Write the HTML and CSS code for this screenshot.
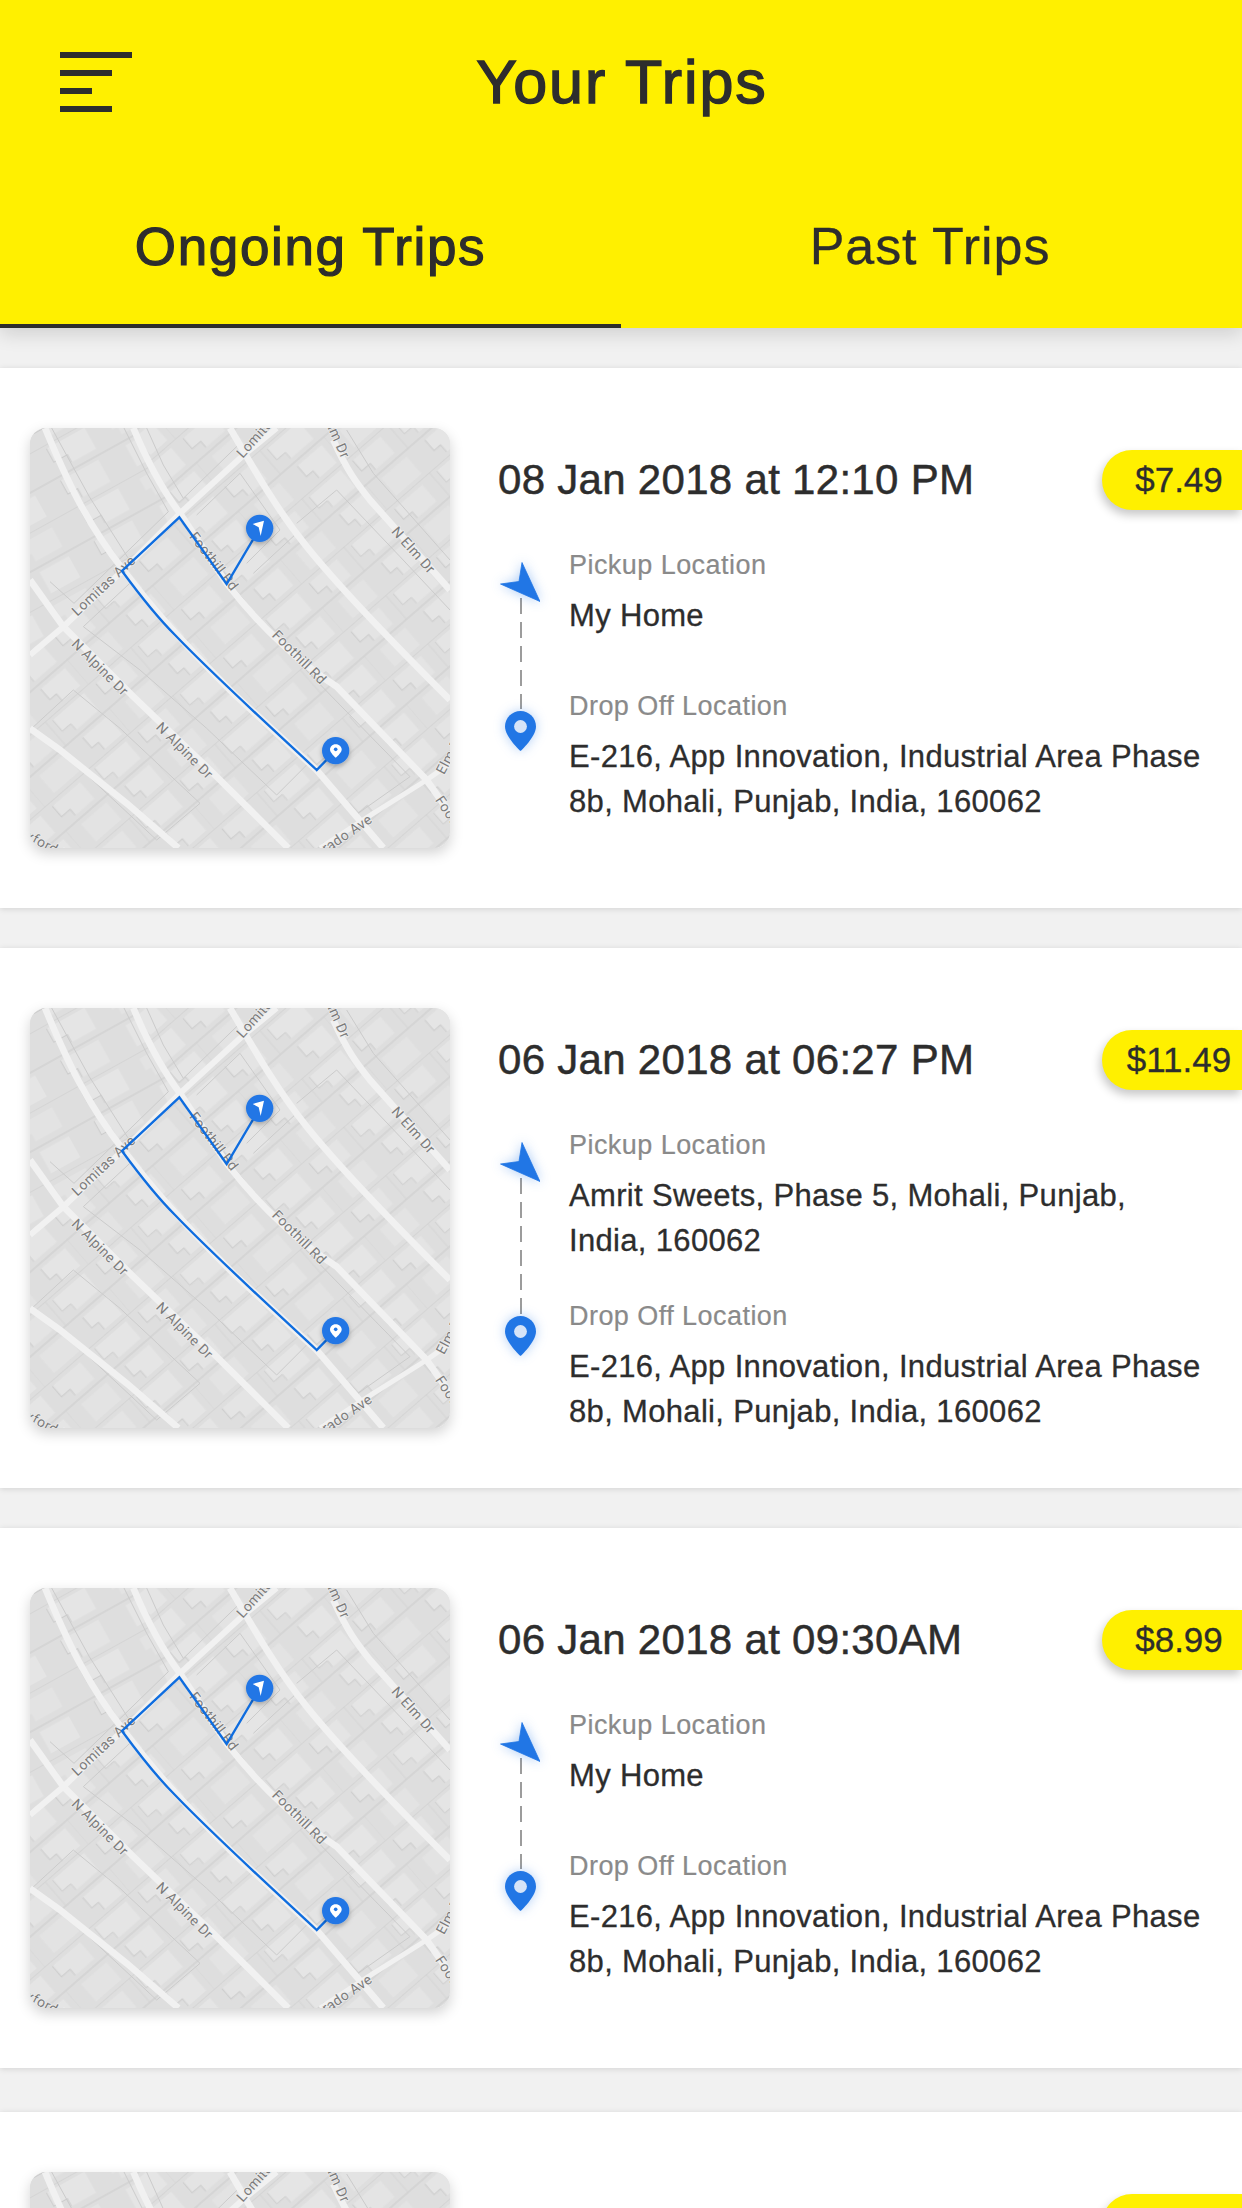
FILE: index.html
```html
<!DOCTYPE html>
<html lang="en">
<head>
<meta charset="utf-8">
<title>Your Trips</title>
<link rel="stylesheet" href="styles.css">
</head>
<body>
<svg class="defs" width="0" height="0" aria-hidden="true">
  <defs>
    <filter id="soft" x="-5%" y="-5%" width="110%" height="110%"><feGaussianBlur stdDeviation="1.3"/></filter>
    <filter id="markerShadow" x="-40%" y="-40%" width="180%" height="180%"><feDropShadow dx="0" dy="6" stdDeviation="8" flood-color="#000" flood-opacity=".28"/></filter>
    <pattern id="lotsA" width="410" height="208" patternUnits="userSpaceOnUse" patternTransform="translate(90 160) rotate(-29)">
      <path d="M50 12h130v72h-84v-26h-46z" fill="#e5e5e5"/>
      <path d="M50 12v46h46v26" fill="none" stroke="#cbcbcb" stroke-width="3"/>
      <path d="M250 18h110v66h-92v-26h-18z" fill="#e3e3e3"/>
      <path d="M40 116h130v76h-96v-30h-34z" fill="#e4e4e4"/>
      <path d="M40 116v46h34v30" fill="none" stroke="#cbcbcb" stroke-width="3"/>
      <path d="M262 118h100v72h-100z" fill="#e5e5e5"/>
      <path d="M0 0H410M0 104H410" stroke="#cbcbcb" stroke-width="3"/>
    </pattern>
    <pattern id="lotsB" width="340" height="192" patternUnits="userSpaceOnUse" patternTransform="translate(520 630) rotate(-41)">
      <path d="M20 14h110v66h-76v-24h-34z" fill="#e4e4e4"/>
      <path d="M20 14v42h34v24" fill="none" stroke="#cbcbcb" stroke-width="3"/>
      <path d="M190 12h124v68h-90v-24h-34z" fill="#e5e5e5"/>
      <path d="M190 12v44h34v24" fill="none" stroke="#cdcdcd" stroke-width="2.5"/>
      <path d="M50 112h100v68h-100z" fill="#e3e3e3"/>
      <path d="M224 110h96v70h-70v-28h-26z" fill="#e5e5e5"/>
      <path d="M224 110v42h26v28" fill="none" stroke="#cbcbcb" stroke-width="3"/>
      <path d="M0 0H340M0 96H340" stroke="#cbcbcb" stroke-width="3"/>
      <path d="M170 0V96M0 96V192" stroke="#d0d0d0" stroke-width="2"/>
    </pattern>
    <symbol id="basemap" viewBox="90 84 1260 1260">
      <rect x="90" y="84" width="1260" height="1260" fill="#dedede"/>
      <g filter="url(#soft)">
        <rect x="90" y="84" width="1260" height="1260" fill="url(#lotsB)"/>
        <path d="M90 84H400L540 340 190 680 90 770Z" fill="#dedede"/>
        <path d="M90 84H400L540 340 190 680 90 770Z" fill="url(#lotsA)"/>
        <g fill="none" stroke="#cbcbcb" stroke-width="3">
          <path d="M155 84 268 290 392 486M372 84 440 220 505 335 222 610 150 545"/>
          <path d="M440 84 490 195 550 295 720 130"/>
          <path d="M590 345 720 220 840 390 740 490"/>
          <path d="M250 680 400 540 520 690 690 860 930 1085 830 1185 620 985 420 810Z"/>
          <path d="M700 560 830 720 1230 1130 1060 1250 960 1130"/>
          <path d="M760 520 890 400 1060 610 1320 880"/>
          <path d="M890 370 1010 270 1200 470 1350 630"/>
          <path d="M90 990 220 870 360 985 600 1210 470 1320 170 1040"/>
          <path d="M1040 90 1120 220 1350 480"/>
        </g>
      </g>
      <g fill="none" stroke="#f1f1f1" stroke-width="20" stroke-linecap="butt">
        <path d="M135 84C200 240 260 370 370 510 450 615 520 700 700 880L950 1110 1150 1344"/>
        <path d="M400 84C440 180 480 260 540 340L680 550C780 680 900 790 1010 860L1280 1140 1350 1240"/>
        <path d="M690 84C780 240 840 340 920 440 1000 540 1180 730 1350 900"/>
        <path d="M1000 120C1040 210 1070 250 1110 300L1350 570"/>
        <path d="M90 540 190 680 400 890 640 1120 865 1344"/>
        <path d="M90 985 180 1050 380 1210 535 1344"/>
        <path d="M90 765 190 680 370 510 540 340 725 170 830 84" stroke-width="18"/>
        <path d="M960 1344 1120 1240 1280 1140 1350 1090" stroke-width="15"/>
      </g>
      <g class="map-label">
        <text transform="translate(232 650) rotate(-43)">Lomitas Ave</text>
        <text transform="translate(728 176) rotate(-48)">Lomitas Ave</text>
        <text transform="translate(972 60) rotate(66)">Elm Dr</text>
        <text transform="translate(1172 396) rotate(48)">N Elm Dr</text>
        <text transform="translate(566 410) rotate(52)">Foothill Rd</text>
        <text transform="translate(814 708) rotate(45)">Foothill Rd</text>
        <text transform="translate(212 734) rotate(45)">N Alpine Dr</text>
        <text transform="translate(466 984) rotate(45)">N Alpine Dr</text>
        <text transform="translate(908 1408) rotate(-34)">Alvarado Ave</text>
        <text transform="translate(1304 1200) rotate(56)">Foothill Rd</text>
        <text transform="translate(1332 1126) rotate(-62)">Elm Dr</text>
        <text transform="translate(48 1302) rotate(28)">Oxford Dr</text>
      </g>
      <path d="M779 385 680 552 538 352 366 513C430 600 480 660 525 705 640 825 800 970 950 1110L1007 1052" fill="none" stroke="#0f6ddf" stroke-width="7" stroke-linejoin="miter"/>
      <g filter="url(#markerShadow)">
        <circle cx="779" cy="385" r="41" fill="#2176e5"/>
        <circle cx="1007" cy="1052" r="41" fill="#2176e5"/>
      </g>
      <path d="M758 372 792 362 782 408 776 382Z" fill="#fff"/>
      <path d="M1007 1033C996 1033 990 1041 990 1049 990 1058 1007 1073 1007 1073S1025 1058 1025 1049C1025 1041 1018 1033 1007 1033Z" fill="#fff"/>
      <circle cx="1007" cy="1048" r="5.5" fill="#2176e5"/>
    </symbol>
    <symbol id="arrow" viewBox="0 0 40 40">
      <path d="M22 .5 40 39.5 .5 22 19 19.5Z" fill="#2176e5" stroke="#2176e5" stroke-width=".8" stroke-linejoin="round"/>
    </symbol>
    <symbol id="pin" viewBox="0 0 31 40">
      <path d="M15.5 0C7 0 0 7 0 15.5 0 26 15.5 40 15.5 40S31 26 31 15.5C31 7 24 0 15.5 0Z" fill="#2176e5"/>
      <circle cx="15.5" cy="15.5" r="6.4" fill="#d6e4f8"/>
    </symbol>
  </defs>
</svg>

<header class="header">
  <div class="topbar">
    <div class="menu"><i class="bar bar-full"></i><i class="bar bar-mid"></i><i class="bar bar-short"></i><i class="bar bar-mid"></i></div>
    <h1 class="title">Your Trips</h1>
  </div>
  <nav class="tabs">
    <div class="tab tab-active">Ongoing Trips</div>
    <div class="tab tab-past">Past Trips</div>
  </nav>
</header>

<main class="list">
  <article class="card">
    <svg class="map"><use href="#basemap"/></svg>
    <div class="details">
      <div class="head"><div class="date">08 Jan 2018 at 12:10 PM</div><div class="price">$7.49</div></div>
      <div class="route">
        <div class="rail"><svg class="ic-arrow"><use href="#arrow"/></svg><span class="dash"></span><svg class="ic-pin"><use href="#pin"/></svg></div>
        <div class="stops">
          <div class="stop"><div class="label">Pickup Location</div><div class="value">My Home</div></div>
          <div class="stop"><div class="label">Drop Off Location</div><div class="value">E-216, App Innovation, Industrial Area Phase 8b, Mohali, Punjab, India, 160062</div></div>
        </div>
      </div>
    </div>
  </article>
  <article class="card">
    <svg class="map"><use href="#basemap"/></svg>
    <div class="details">
      <div class="head"><div class="date">06 Jan 2018 at 06:27 PM</div><div class="price">$11.49</div></div>
      <div class="route route-long">
        <div class="rail"><svg class="ic-arrow"><use href="#arrow"/></svg><span class="dash"></span><svg class="ic-pin"><use href="#pin"/></svg></div>
        <div class="stops">
          <div class="stop"><div class="label">Pickup Location</div><div class="value">Amrit Sweets, Phase 5, Mohali, Punjab, India, 160062</div></div>
          <div class="stop"><div class="label">Drop Off Location</div><div class="value">E-216, App Innovation, Industrial Area Phase 8b, Mohali, Punjab, India, 160062</div></div>
        </div>
      </div>
    </div>
  </article>
  <article class="card">
    <svg class="map"><use href="#basemap"/></svg>
    <div class="details">
      <div class="head"><div class="date">06 Jan 2018 at 09:30AM</div><div class="price">$8.99</div></div>
      <div class="route">
        <div class="rail"><svg class="ic-arrow"><use href="#arrow"/></svg><span class="dash"></span><svg class="ic-pin"><use href="#pin"/></svg></div>
        <div class="stops">
          <div class="stop"><div class="label">Pickup Location</div><div class="value">My Home</div></div>
          <div class="stop"><div class="label">Drop Off Location</div><div class="value">E-216, App Innovation, Industrial Area Phase 8b, Mohali, Punjab, India, 160062</div></div>
        </div>
      </div>
    </div>
  </article>
  <article class="card card-cut">
    <svg class="map"><use href="#basemap"/></svg>
    <div class="details">
      <div class="head"><div class="date"></div><div class="price"></div></div>
    </div>
  </article>
</main>
</body>
</html>
```
FILE: styles.css
```css
* { box-sizing: border-box; }
html, body { margin: 0; height: 2208px; overflow: hidden; }
body {
  width: 1242px;
  background: #f1f1f1;
  color: #2d2d2d;
  font-family: "Liberation Sans", Arial, sans-serif;
}
.defs { position: absolute; }

.header {
  position: relative;
  z-index: 2;
  height: 328px;
  background: #fff000;
  box-shadow: 0 6px 18px rgba(0, 0, 0, .14);
}
.topbar {
  height: 164px;
  display: grid;
  grid-template-columns: 1fr auto 1fr;
  align-items: center;
  padding-left: 60px;
}
.menu { display: flex; flex-direction: column; gap: 12px; }
.bar { display: block; height: 6px; background: #2d2d2d; }
.bar-full { width: 72px; }
.bar-mid { width: 52px; }
.bar-short { width: 32px; }
.title {
  grid-column: 2;
  margin: 0 58px 0 0;
  font-size: 61px;
  font-weight: 400;
  letter-spacing: 1.9px;
  -webkit-text-stroke: 1.4px #2d2d2d;
}

.tabs { display: grid; grid-template-columns: 1fr 1fr; }
.tab {
  height: 164px;
  padding-top: 4px;
  border-bottom: 4px solid transparent;
  display: flex;
  align-items: center;
  justify-content: center;
  font-size: 52px;
}
.tab-past {
  padding-right: 3px;
  letter-spacing: .95px;
  -webkit-text-stroke: .3px #2d2d2d;
}
.tab-active {
  border-bottom-color: #2d2d2d;
  font-size: 53px;
  letter-spacing: 1.65px;
  -webkit-text-stroke: 1.2px #2d2d2d;
}

.list { padding-top: 40px; display: flex; flex-direction: column; gap: 40px; }
.card {
  height: 540px;
  flex: none;
  padding: 60px 0 60px 30px;
  display: flex;
  background: #fff;
  box-shadow: 0 1px 6px rgba(0, 0, 0, .13);
}
.card-cut { margin-top: 4px; }
.map {
  flex: none;
  width: 420px;
  height: 420px;
  border-radius: 16px;
  box-shadow: 0 5px 14px rgba(0, 0, 0, .18);
}
.map-label text {
  font-family: Roboto, "Liberation Sans", sans-serif;
  font-size: 42px;
  letter-spacing: 1px;
  fill: #7b7b7b;
  stroke: #efefef;
  stroke-width: 4px;
  paint-order: stroke;
}

.details { flex: 1; min-width: 0; padding: 22px 0 0 48px; }
.head { display: flex; align-items: center; justify-content: space-between; height: 60px; }
.date {
  font-size: 42px;
  letter-spacing: .3px;
  white-space: nowrap;
  -webkit-text-stroke: .5px #2d2d2d;
}
.price {
  flex: none;
  width: 140px;
  height: 60px;
  padding-left: 14px;
  border-radius: 30px 0 0 30px;
  background: #fff000;
  box-shadow: -2px 5px 10px rgba(0, 0, 0, .22);
  display: flex;
  align-items: center;
  justify-content: center;
  font-size: 35px;
  -webkit-text-stroke: .3px #2d2d2d;
}

.route { display: flex; margin-top: 37px; }
.rail {
  flex: none;
  width: 40px;
  margin-left: 2px;
  padding: 15px 0 107px;
  display: flex;
  flex-direction: column;
  align-items: center;
}
.route-long .rail { padding-bottom: 113px; }
.route-long .stop { margin-bottom: 35px; }
.ic-arrow { width: 40px; height: 40px; flex: none; filter: drop-shadow(0 0 6px rgba(33, 118, 229, .4)); position: relative; }
.ic-pin { width: 31px; height: 40px; flex: none; filter: drop-shadow(0 0 6px rgba(33, 118, 229, .35)); position: relative; }
.dash {
  flex: 1;
  width: 2px;
  margin: -4px 0 2px 1px;
  background: repeating-linear-gradient(to bottom, #9c9c9c 0 16px, transparent 16px 24px);
}
.stops { flex: 1; min-width: 0; padding: 0 36px 0 29px; }
.stop { min-height: 107px; margin-bottom: 34px; }
.label {
  font-size: 27px;
  line-height: 36px;
  letter-spacing: .45px;
  color: #8a8a8a;
  white-space: nowrap;
  -webkit-text-stroke: .2px #8a8a8a;
}
.value {
  margin-top: 10px;
  font-size: 31px;
  line-height: 45px;
  letter-spacing: .33px;
  -webkit-text-stroke: .3px #2d2d2d;
}
```
